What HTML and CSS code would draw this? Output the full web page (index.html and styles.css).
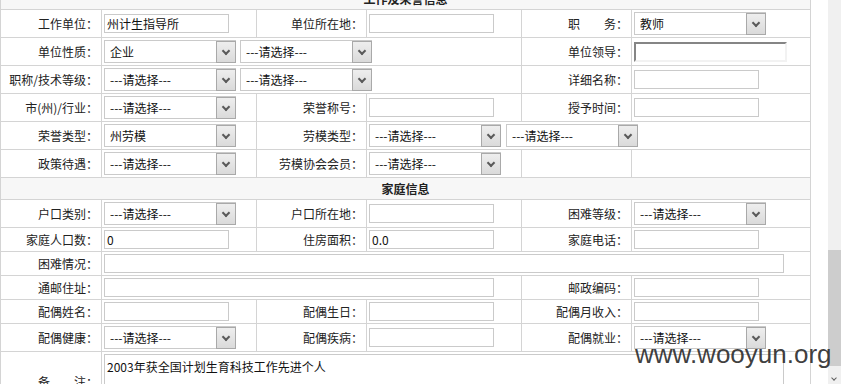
FILE: index.html
```html
<!DOCTYPE html>
<html lang="zh-CN">
<head>
  <meta charset="UTF-8">
  <title>个人信息</title>
  <link rel="stylesheet" href="styles.css">
</head>
<body>
  <table class="info">
    <colgroup>
      <col class="c-lab1"><col class="c-val"><col class="c-lab"><col class="c-val"><col class="c-lab"><col class="c-val3">
    </colgroup>
    <tr class="head"><td colspan="6">工作及荣誉信息</td></tr>
    <tr>
      <td class="lab">工作单位：</td>
      <td class="val"><input class="txt" type="text" value="州计生指导所"></td>
      <td class="lab">单位所在地：</td>
      <td class="val"><input class="txt" type="text"></td>
      <td class="lab">职&#12288;&#12288;务：</td>
      <td class="val"><span class="sel"><select><option>教师</option></select></span></td>
    </tr>
    <tr>
      <td class="lab">单位性质：</td>
      <td class="val" colspan="3"><span class="sel"><select><option>企业</option></select></span><span class="sel"><select><option>---请选择---</option></select></span></td>
      <td class="lab">单位领导：</td>
      <td class="val"><input class="lead" type="text"></td>
    </tr>
    <tr>
      <td class="lab">职称/技术等级：</td>
      <td class="val" colspan="3"><span class="sel"><select><option>---请选择---</option></select></span><span class="sel"><select><option>---请选择---</option></select></span></td>
      <td class="lab">详细名称：</td>
      <td class="val"><input class="txt" type="text"></td>
    </tr>
    <tr>
      <td class="lab">市(州)/行业：</td>
      <td class="val"><span class="sel"><select><option>---请选择---</option></select></span></td>
      <td class="lab">荣誉称号：</td>
      <td class="val"><input class="txt" type="text"></td>
      <td class="lab">授予时间：</td>
      <td class="val"><input class="txt" type="text"></td>
    </tr>
    <tr>
      <td class="lab">荣誉类型：</td>
      <td class="val"><span class="sel"><select><option>州劳模</option></select></span></td>
      <td class="lab">劳模类型：</td>
      <td class="val" colspan="3"><span class="sel"><select><option>---请选择---</option></select></span><span class="sel sel-gap"><select><option>---请选择---</option></select></span></td>
    </tr>
    <tr>
      <td class="lab">政策待遇：</td>
      <td class="val"><span class="sel"><select><option>---请选择---</option></select></span></td>
      <td class="lab">劳模协会会员：</td>
      <td class="val"><span class="sel"><select><option>---请选择---</option></select></span></td>
      <td class="lab"></td>
      <td class="val"></td>
    </tr>

    <tr class="head"><td colspan="6">家庭信息</td></tr>
    <tr>
      <td class="lab">户口类别：</td>
      <td class="val"><span class="sel"><select><option>---请选择---</option></select></span></td>
      <td class="lab">户口所在地：</td>
      <td class="val"><input class="txt" type="text"></td>
      <td class="lab">困难等级：</td>
      <td class="val"><span class="sel"><select><option>---请选择---</option></select></span></td>
    </tr>
    <tr>
      <td class="lab">家庭人口数：</td>
      <td class="val"><input class="txt" type="text" value="0"></td>
      <td class="lab">住房面积：</td>
      <td class="val"><input class="txt" type="text" value="0.0"></td>
      <td class="lab">家庭电话：</td>
      <td class="val"><input class="txt" type="text"></td>
    </tr>
    <tr>
      <td class="lab">困难情况：</td>
      <td class="val" colspan="5"><input class="txt txt-full" type="text"></td>
    </tr>
    <tr>
      <td class="lab">通邮住址：</td>
      <td class="val" colspan="3"><input class="txt txt-wide" type="text"></td>
      <td class="lab">邮政编码：</td>
      <td class="val"><input class="txt" type="text"></td>
    </tr>
    <tr>
      <td class="lab">配偶姓名：</td>
      <td class="val"><input class="txt" type="text"></td>
      <td class="lab">配偶生日：</td>
      <td class="val"><input class="txt" type="text"></td>
      <td class="lab">配偶月收入：</td>
      <td class="val"><input class="txt" type="text"></td>
    </tr>
    <tr>
      <td class="lab">配偶健康：</td>
      <td class="val"><span class="sel"><select><option>---请选择---</option></select></span></td>
      <td class="lab">配偶疾病：</td>
      <td class="val"><input class="txt" type="text"></td>
      <td class="lab">配偶就业：</td>
      <td class="val"><span class="sel"><select><option>---请选择---</option></select></span></td>
    </tr>
    <tr>
      <td class="lab">备&#12288;&#12288;注：</td>
      <td class="val" colspan="5"><textarea class="note">2003年获全国计划生育科技工作先进个人</textarea></td>
    </tr>
  </table>

  <div class="scrollbar">
    <div class="thumb"></div>
    <span class="arrow-down"></span>
  </div>

  <div class="watermark">www.wooyun.org</div>
</body>
</html>
```

FILE: styles.css
```css
* {
  box-sizing: border-box;
}

html, body {
  margin: 0;
  padding: 0;
  overflow: hidden;
  background-color: #ffffff;
}

body {
  position: relative;
  height: 384px;
  font-family: "Noto Sans CJK SC", "Microsoft YaHei", sans-serif;
  font-size: 12px;
  color: #222222;
}

/* tabla del formulario */
.info {
  border-collapse: collapse;
  table-layout: fixed;
  width: 811px;
  margin-top: -13px;
}

.c-lab1 { width: 101px; }
.c-val  { width: 155px; }
.c-lab  { width: 110px; }
.c-val3 { width: 179px; }

.info td {
  border: 1px solid #d4d4d4;
  padding: 2px;
  vertical-align: middle;
}

.info .lab {
  text-align: right;
  padding-right: 3px;
  white-space: nowrap;
  line-height: 17px;
}

.info .val {
  font-size: 0;
}

.info .head td {
  background-color: #f7f7f7;
  text-align: center;
  font-weight: bold;
  line-height: 17px;
  padding: 2px;
}

/* campos */
.txt, .lead, select, .note {
  font-family: "Noto Sans CJK SC", "Microsoft YaHei", sans-serif;
  font-size: 12px;
  color: #111111;
  vertical-align: middle;
  outline: none;
}

.txt {
  width: 125px;
  height: 19px;
  padding: 0 2px;
  border: 1px solid #cacaca;
  background: #ffffff;
}

.txt-full {
  width: 680px;
}

.txt-wide {
  width: 390px;
}

.lead {
  width: 153px;
  height: 20px;
  padding: 0 2px;
  border-style: solid;
  border-width: 2px;
  border-color: #858585 #f2f2f2 #f2f2f2 #858585;
  background: #ffffff;
}

.sel {
  display: inline-block;
  position: relative;
  vertical-align: middle;
}

.sel + .sel {
  margin-left: 4px;
}

.sel-gap + .sel,
.sel + .sel-gap {
  margin-left: 5px;
}

.sel select {
  display: block;
  width: 132px;
  height: 23px;
  padding: 0 20px 0 5px;
  border: 1px solid #cacaca;
  border-radius: 0;
  background: #ffffff;
  -webkit-appearance: none;
  appearance: none;
}

/* boton del desplegable */
.sel::after {
  content: '';
  position: absolute;
  top: 1px;
  right: 0;
  bottom: 0;
  width: 18px;
  border: 1px solid #a9a9a9;
  background: linear-gradient(#eeeeee, #dadada);
}

.sel::before {
  content: '';
  position: absolute;
  z-index: 1;
  right: 7px;
  top: 8px;
  width: 4px;
  height: 4px;
  border-right: 2px solid #5a5a5a;
  border-bottom: 2px solid #5a5a5a;
  transform: rotate(45deg);
}

.note {
  display: block;
  width: 680px;
  height: 54px;
  padding: 3px 2px;
  line-height: 17px;
  border: 1px solid #cacaca;
  resize: none;
}

/* barra de desplazamiento */
.scrollbar {
  position: absolute;
  top: 0;
  right: 0;
  width: 13px;
  height: 384px;
  background-color: #f0f0f0;
}

.thumb {
  position: absolute;
  top: 250px;
  left: 0;
  width: 13px;
  height: 116px;
  background-color: #cdcdcd;
}

.arrow-down {
  position: absolute;
  left: 4px;
  top: 376px;
  width: 4px;
  height: 4px;
  border-right: 1px solid #606060;
  border-bottom: 1px solid #606060;
  transform: rotate(45deg);
}

.watermark {
  position: absolute;
  left: 635px;
  top: 341px;
  font-family: "Liberation Sans", Arial, sans-serif;
  font-size: 26px;
  line-height: 26px;
  color: rgba(45, 45, 45, 0.92);
  white-space: nowrap;
}
```
